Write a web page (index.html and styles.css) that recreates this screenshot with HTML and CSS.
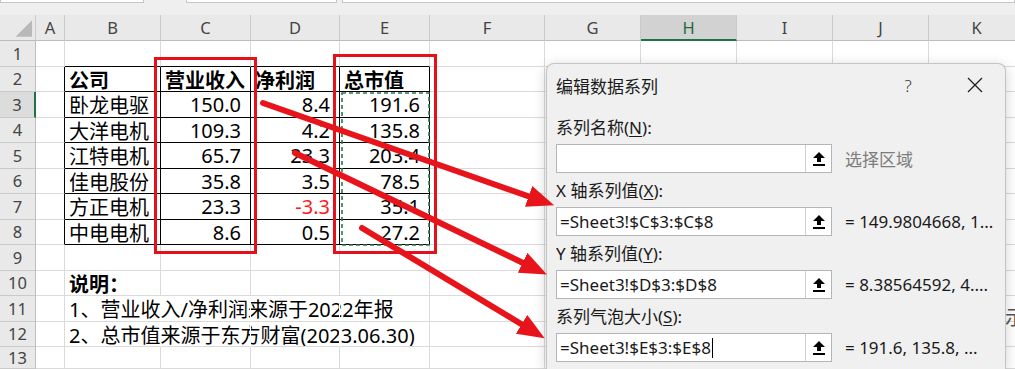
FILE: index.html
```html
<!DOCTYPE html>
<html lang="zh-CN">
<head>
<meta charset="utf-8">
<title>编辑数据系列</title>
<link rel="stylesheet" href="styles.css">
</head>
<body>
<div class="topbar">
  <div class="fbox fb1"></div>
  <div class="fbox fb2"></div>
  <div class="fbox fb3"></div>
</div>
<div class="sheet">
  <div class="c ch corner"><svg width="36" height="26" viewBox="0 0 36 26"><polygon points="33,5 33,22 16,22" fill="#b9b9b9"/></svg></div>
  <div class="c ch">A</div><div class="c ch">B</div><div class="c ch">C</div><div class="c ch">D</div><div class="c ch">E</div><div class="c ch">F</div><div class="c ch">G</div><div class="c ch act">H</div><div class="c ch">I</div><div class="c ch">J</div><div class="c ch">K</div>

  <div class="c rh">1</div><div class="c"></div><div class="c tt"></div><div class="c tt"></div><div class="c tt"></div><div class="c tt"></div><div class="c"></div><div class="c"></div><div class="c"></div><div class="c"></div><div class="c"></div><div class="c"></div>

  <div class="c rh">2</div><div class="c tl"></div><div class="c t b">公司</div><div class="c t b">营业收入</div><div class="c t b">净利润</div><div class="c t b">总市值</div><div class="c"></div><div class="c"></div><div class="c"></div><div class="c"></div><div class="c"></div><div class="c"></div>

  <div class="c rh ract">3</div><div class="c tl"></div><div class="c t">卧龙电驱</div><div class="c t num">150.0</div><div class="c t num">8.4</div><div class="c t num">191.6</div><div class="c"></div><div class="c"></div><div class="c"></div><div class="c"></div><div class="c"></div><div class="c"></div>

  <div class="c rh">4</div><div class="c tl"></div><div class="c t">大洋电机</div><div class="c t num">109.3</div><div class="c t num">4.2</div><div class="c t num">135.8</div><div class="c"></div><div class="c"></div><div class="c"></div><div class="c"></div><div class="c"></div><div class="c"></div>

  <div class="c rh">5</div><div class="c tl"></div><div class="c t">江特电机</div><div class="c t num">65.7</div><div class="c t num">23.3</div><div class="c t num">203.4</div><div class="c"></div><div class="c"></div><div class="c"></div><div class="c"></div><div class="c"></div><div class="c"></div>

  <div class="c rh">6</div><div class="c tl"></div><div class="c t">佳电股份</div><div class="c t num">35.8</div><div class="c t num">3.5</div><div class="c t num">78.5</div><div class="c"></div><div class="c"></div><div class="c"></div><div class="c"></div><div class="c"></div><div class="c"></div>

  <div class="c rh">7</div><div class="c tl"></div><div class="c t">方正电机</div><div class="c t num">23.3</div><div class="c t num neg">-3.3</div><div class="c t num">35.1</div><div class="c"></div><div class="c"></div><div class="c"></div><div class="c"></div><div class="c"></div><div class="c"></div>

  <div class="c rh">8</div><div class="c tl"></div><div class="c t">中电电机</div><div class="c t num">8.6</div><div class="c t num">0.5</div><div class="c t num">27.2</div><div class="c"></div><div class="c"></div><div class="c"></div><div class="c"></div><div class="c"></div><div class="c"></div>

  <div class="c rh">9</div><div class="c"></div><div class="c"></div><div class="c"></div><div class="c"></div><div class="c"></div><div class="c"></div><div class="c"></div><div class="c"></div><div class="c"></div><div class="c"></div><div class="c"></div>

  <div class="c rh">10</div><div class="c"></div><div class="c b">说明：</div><div class="c"></div><div class="c"></div><div class="c"></div><div class="c"></div><div class="c"></div><div class="c"></div><div class="c"></div><div class="c"></div><div class="c"></div>

  <div class="c rh">11</div><div class="c"></div><div class="c nr">1、营业收入/净利润来源于2022年报</div><div class="c nr"></div><div class="c nr"></div><div class="c"></div><div class="c"></div><div class="c"></div><div class="c"></div><div class="c"></div><div class="c"></div><div class="c"></div>

  <div class="c rh">12</div><div class="c"></div><div class="c nr">2、总市值来源于东方财富(2023.06.30)</div><div class="c nr"></div><div class="c nr"></div><div class="c"></div><div class="c"></div><div class="c"></div><div class="c"></div><div class="c"></div><div class="c"></div><div class="c"></div>

  <div class="c rh">13</div><div class="c"></div><div class="c"></div><div class="c"></div><div class="c"></div><div class="c"></div><div class="c"></div><div class="c"></div><div class="c"></div><div class="c"></div><div class="c"></div><div class="c"></div>
</div>
<span class="behind">示</span>

<div class="dialog">
  <div class="dtitle">
    <span class="dtx">编辑数据系列</span>
    <span class="help">?</span>
    <span class="close"><svg width="16" height="16" viewBox="0 0 16 16"><path d="M1 1 L15 15 M15 1 L1 15" stroke="#222" stroke-width="1.3" fill="none"/></svg></span>
  </div>
  <div class="field">
    <div class="lbl">系列名称(<u>N</u>):</div>
    <div class="frow">
      <div class="inp"><span class="val"></span><span class="btn"><svg width="14" height="16" viewBox="0 0 14 16"><path d="M7 1 L13 7 H9 V11 H5 V7 H1 Z" fill="#000"/><rect x="1" y="13" width="12" height="2" fill="#000"/></svg></span></div>
      <span class="side gray">选择区域</span>
    </div>
  </div>
  <div class="field">
    <div class="lbl">X 轴系列值(<u>X</u>):</div>
    <div class="frow">
      <div class="inp"><span class="val">=Sheet3!$C$3:$C$8</span><span class="btn"><svg width="14" height="16" viewBox="0 0 14 16"><path d="M7 1 L13 7 H9 V11 H5 V7 H1 Z" fill="#000"/><rect x="1" y="13" width="12" height="2" fill="#000"/></svg></span></div>
      <span class="side">= 149.9804668, 1...</span>
    </div>
  </div>
  <div class="field">
    <div class="lbl">Y 轴系列值(<u>Y</u>):</div>
    <div class="frow">
      <div class="inp"><span class="val">=Sheet3!$D$3:$D$8</span><span class="btn"><svg width="14" height="16" viewBox="0 0 14 16"><path d="M7 1 L13 7 H9 V11 H5 V7 H1 Z" fill="#000"/><rect x="1" y="13" width="12" height="2" fill="#000"/></svg></span></div>
      <span class="side">= 8.38564592, 4....</span>
    </div>
  </div>
  <div class="field">
    <div class="lbl">系列气泡大小(<u>S</u>):</div>
    <div class="frow">
      <div class="inp"><span class="val">=Sheet3!$E$3:$E$8<span class="caret"></span></span><span class="btn"><svg width="14" height="16" viewBox="0 0 14 16"><path d="M7 1 L13 7 H9 V11 H5 V7 H1 Z" fill="#000"/><rect x="1" y="13" width="12" height="2" fill="#000"/></svg></span></div>
      <span class="side">= 191.6, 135.8, ...</span>
    </div>
  </div>
</div>

<svg class="marks" width="1015" height="369" viewBox="0 0 1015 369">
  <defs>
    <marker id="ah" markerUnits="userSpaceOnUse" markerWidth="28" markerHeight="24" refX="11" refY="11" orient="auto">
      <path d="M0,0 L27,11 L0,22 Z" fill="#e8141c"/>
    </marker>
  </defs>
  <rect x="155.5" y="58.5" width="100" height="194" fill="none" stroke="#e4111b" stroke-width="3"/>
  <rect x="334.5" y="55.5" width="101" height="197" fill="none" stroke="#e4111b" stroke-width="3"/>
  <rect x="342" y="93" width="87" height="152" fill="none" stroke="#2a7a4b" stroke-width="1.6" stroke-dasharray="4 3"/>
  <line x1="263" y1="103" x2="539" y2="200" stroke="#e8141c" stroke-width="6" stroke-linecap="round" marker-end="url(#ah)"/>
  <line x1="295" y1="153" x2="532.5" y2="267.5" stroke="#e8141c" stroke-width="6" stroke-linecap="round" marker-end="url(#ah)"/>
  <line x1="362" y1="228" x2="531" y2="330" stroke="#e8141c" stroke-width="6" stroke-linecap="round" marker-end="url(#ah)"/>
</svg>
</body>
</html>
```
FILE: styles.css
```css
html, body {
  margin: 0;
  padding: 0;
}
body {
  width: 1015px;
  height: 369px;
  overflow: hidden;
  position: relative;
  background: #fff;
  font-family: "Noto Sans", "Noto Sans CJK SC", sans-serif;
  color: #000;
}

.topbar {
  height: 15px;
  background: #efefef;
  display: flex;
  align-items: flex-start;
}
.fbox {
  height: 2px;
  background: #fff;
  border: 1px solid #c6c6c6;
  border-top: none;
  box-sizing: content-box;
}
.fb1 { width: 142px; }
.fb2 { width: 149px; margin-left: 42px; }
.fb3 { flex: 1; margin-left: 5px; }

.sheet {
  display: grid;
  grid-template-columns: 36px 29px 96px 90px 89px 90px 115px 96px 96px 96px 96px 96px;
  grid-template-rows: 26px repeat(12, 25.5px) 22px;
  width: 1025px;
}
.c {
  box-sizing: border-box;
  border-right: 1px solid #dadada;
  border-bottom: 1px solid #dadada;
  display: flex;
  align-items: center;
  padding: 1px 4px 0 4px;
  font-size: 20px;
  white-space: nowrap;
  min-width: 0;
  overflow: visible;
}
.ch {
  background: #e9e9e9;
  border-right-color: #cacaca;
  border-bottom-color: #bdbdbd;
  justify-content: center;
  font-size: 16.5px;
  color: #444;
  padding: 0;
}
.corner { padding: 0; align-items: stretch; }
.corner svg { display: block; }
.ch.act {
  background: #d2d2d2;
  border-bottom: 2px solid #217346;
  color: #1f6a40;
}
.rh {
  background: #e9e9e9;
  border-right-color: #bdbdbd;
  border-bottom-color: #cacaca;
  justify-content: center;
  font-size: 16.5px;
  color: #444;
  padding: 0;
}
.rh.ract {
  background: #dcdcdc;
  border-right: 2px solid #217346;
}
.t { border-right-color: #000; border-bottom-color: #000; }
.tl { border-right-color: #000; }
.tt { border-bottom-color: #000; }
.b { font-weight: bold; }
.num { justify-content: flex-end; padding-right: 9px; }
.neg { color: #ff1a1a; }
.nr { border-right-color: #fff; }

.behind {
  position: absolute;
  left: 1005px;
  top: 303px;
  width: 10px;
  overflow: hidden;
  font-size: 20px;
  line-height: 28px;
  color: #555;
  font-family: "Noto Sans CJK SC", sans-serif;
}

.dialog {
  position: absolute;
  left: 546px;
  top: 63px;
  width: 460px;
  height: 306px;
  box-sizing: border-box;
  background: #f0f0f0;
  border: 1px solid #c4c4c4;
  border-bottom: none;
  border-radius: 8px 8px 0 0;
  box-shadow: 0 3px 14px rgba(0, 0, 0, 0.18);
  padding: 10px 0 0 9px;
  font-size: 17px;
  color: #1a1a1a;
  z-index: 2;
  overflow: hidden;
}
.dtitle {
  display: flex;
  align-items: center;
  height: 22px;
  margin-bottom: 21px;
}
.dtx { flex: 1; }
.help {
  width: 20px;
  text-align: center;
  color: #333;
  font-weight: 300;
}
.close {
  width: 20px;
  height: 22px;
  margin-left: 47px;
  margin-right: 20px;
  display: flex;
  align-items: center;
  justify-content: center;
}
.close svg { display: block; }
.field { margin-bottom: 7px; }
.field:last-child { margin-bottom: 0; }
.lbl {
  height: 22px;
  line-height: 22px;
}
.lbl u { text-underline-offset: 2px; }
.frow {
  display: flex;
  align-items: center;
  margin-top: 5px;
  height: 29px;
}
.inp {
  width: 276px;
  height: 29px;
  box-sizing: border-box;
  border: 1px solid #b5b5b5;
  background: #fff;
  display: flex;
}
.val {
  flex: 1;
  padding-left: 3px;
  line-height: 27px;
  white-space: nowrap;
  display: flex;
  align-items: center;
}
.caret {
  display: inline-block;
  width: 1px;
  height: 20px;
  background: #000;
  margin-left: 1px;
}
.btn {
  width: 25px;
  border-left: 1px solid #cfcfcf;
  display: flex;
  align-items: center;
  justify-content: center;
}
.btn svg { display: block; }
.side {
  margin-left: 13px;
  white-space: nowrap;
  color: #1a1a1a;
}
.side.gray { color: #7d7d7d; }

.marks {
  position: absolute;
  left: 0;
  top: 0;
  z-index: 3;
  pointer-events: none;
}
```
